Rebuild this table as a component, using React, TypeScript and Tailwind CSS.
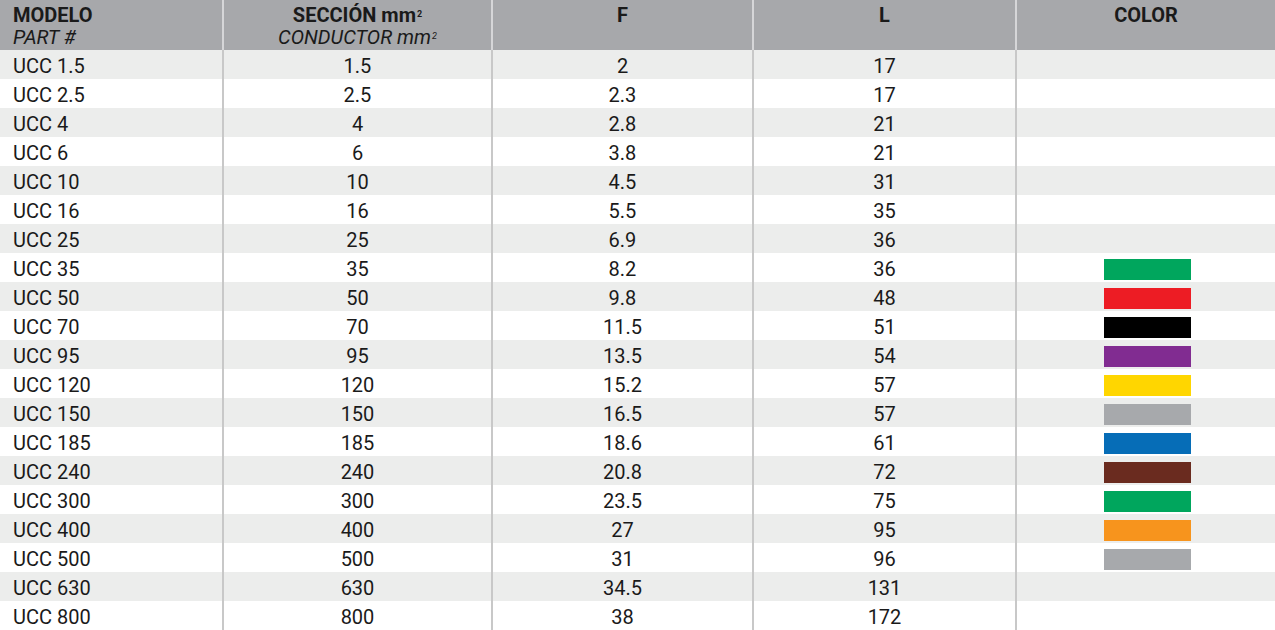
import React from "react";

const rows: [string, string, string, string, string | null][] = [
  ["UCC 1.5", "1.5", "2", "17", null],
  ["UCC 2.5", "2.5", "2.3", "17", null],
  ["UCC 4", "4", "2.8", "21", null],
  ["UCC 6", "6", "3.8", "21", null],
  ["UCC 10", "10", "4.5", "31", null],
  ["UCC 16", "16", "5.5", "35", null],
  ["UCC 25", "25", "6.9", "36", null],
  ["UCC 35", "35", "8.2", "36", "bg-[#00a65d]"],
  ["UCC 50", "50", "9.8", "48", "bg-[#ed1c24]"],
  ["UCC 70", "70", "11.5", "51", "bg-[#000000]"],
  ["UCC 95", "95", "13.5", "54", "bg-[#812c91]"],
  ["UCC 120", "120", "15.2", "57", "bg-[#ffd600]"],
  ["UCC 150", "150", "16.5", "57", "bg-[#a7a9ac]"],
  ["UCC 185", "185", "18.6", "61", "bg-[#066db7]"],
  ["UCC 240", "240", "20.8", "72", "bg-[#6a2b1f]"],
  ["UCC 300", "300", "23.5", "75", "bg-[#00a65d]"],
  ["UCC 400", "400", "27", "95", "bg-[#f7941d]"],
  ["UCC 500", "500", "31", "96", "bg-[#a7a9ac]"],
  ["UCC 630", "630", "34.5", "131", null],
  ["UCC 800", "800", "38", "172", null],
];

const grid = "grid grid-cols-[222px_269px_261px_263px_1fr]";

export default function App() {
  return (
    <div
      className="w-[1275px] h-[630px] overflow-hidden bg-white text-[#1a1a1a]"
      style={{ fontFamily: "Roboto, 'Liberation Sans', sans-serif" }}
    >
      <div className={`${grid} h-[50px] bg-[#a7a8ab] text-[20px] leading-[22px]`}>
        <div className="pl-[13px] pt-[4px]">
          <div className="font-bold">MODELO</div>
          <div className="italic">PART #</div>
        </div>
        <div className="border-l-2 border-[#d6d6d8] text-center pt-[4px]">
          <div className="font-bold">
            SECCIÓN mm<sup className="text-[9px] relative -top-[5px] ml-[1px]">2</sup>
          </div>
          <div className="italic">
            CONDUCTOR mm<sup className="text-[9px] relative -top-[5px] ml-[1px]">2</sup>
          </div>
        </div>
        <div className="border-l-2 border-[#d6d6d8] text-center pt-[4px] font-bold">F</div>
        <div className="border-l-2 border-[#d6d6d8] text-center pt-[4px] font-bold">L</div>
        <div className="border-l-2 border-[#d6d6d8] text-center pt-[4px] font-bold">COLOR</div>
      </div>
      {rows.map((r, i) => (
        <div
          key={r[0]}
          className={`${grid} h-[29px] text-[20px] ${i % 2 === 0 ? "bg-[#ecedec]" : "bg-white"}`}
        >
          <div className="pl-[13px] pt-[4px] leading-[25px]">{r[0]}</div>
          <div className="border-l-2 border-[#c8c8c8] text-center pt-[4px] leading-[25px]">{r[1]}</div>
          <div className="border-l-2 border-[#c8c8c8] text-center pt-[4px] leading-[25px]">{r[2]}</div>
          <div className="border-l-2 border-[#c8c8c8] text-center pt-[4px] leading-[25px]">{r[3]}</div>
          <div className="border-l-2 border-[#c8c8c8] flex items-center justify-center pt-[4px] pl-[3px]">
            {r[4] && <div className={`w-[87px] h-[21px] ${r[4]}`} />}
          </div>
        </div>
      ))}
    </div>
  );
}
